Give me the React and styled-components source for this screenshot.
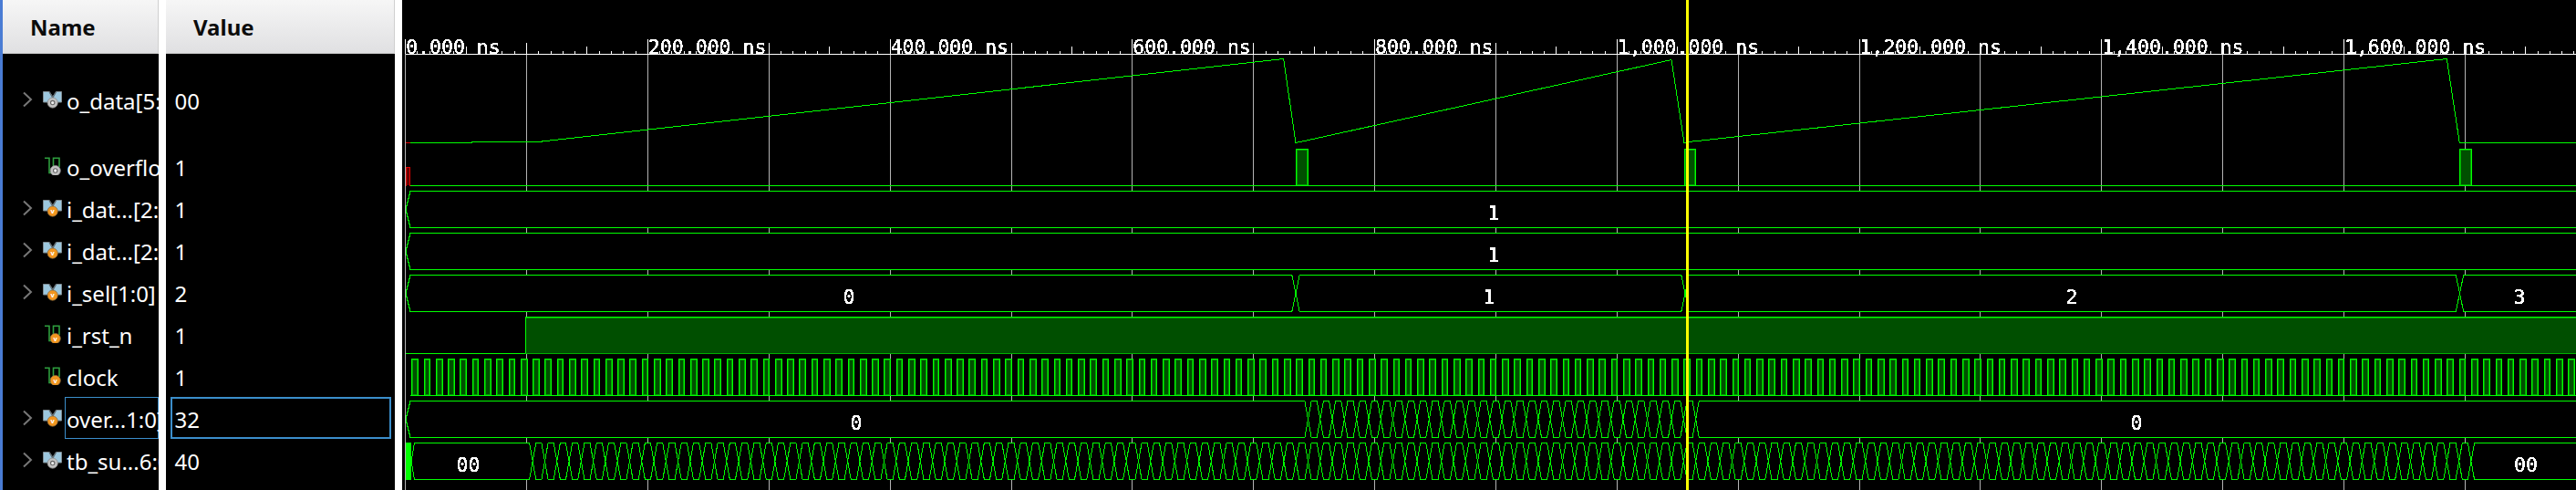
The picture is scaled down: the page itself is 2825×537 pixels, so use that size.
import React from "react";
import styled, { createGlobalStyle } from "styled-components";

const GREEN = "#00ff00";
const STEP = 132.86; // px per 100 ns
const X0 = 444.7;
const WIDTH = 2825;
const PANE_X = 441;

const xAt = ns => X0 + (ns / 100) * STEP;
const px = x => Math.floor(x) + 0.5;

const GlobalStyle = createGlobalStyle`
  html, body {
    margin: 0;
    padding: 0;
    background: #000;
    overflow: hidden;
  }
`;

const Container = styled.div`
  display: flex;
  width: 2825px;
  height: 537px;
  background: #fff;
  font-family: "Noto Sans", sans-serif;
  border-left: 3px solid #4a7cd4;
  box-sizing: border-box;
`;

const Column = styled.div`
  flex: none;
  width: ${props => props.$width}px;
  margin-right: ${props => props.$gap}px;
  background: #000;
  overflow: hidden;
`;

const Header = styled.div`
  height: 59px;
  box-sizing: border-box;
  padding-left: ${props => props.$pad}px;
  display: flex;
  align-items: center;
  background: linear-gradient(#f6f6f6, #e0e0e2);
  border-bottom: 1px solid #c6c6c6;
  border-right: 1px solid #cfcfcf;
  color: #0c0c0c;
  font-size: 24px;
  font-weight: 700;
`;

const NameRow = styled.div`
  display: flex;
  align-items: center;
  height: ${props => (props.$tall ? 100 : 46)}px;
  padding-left: 19px;
`;

const ChevronSlot = styled.div`
  flex: none;
  width: 24px;
  height: 18px;
`;

const Chevron = styled.svg`
  display: block;
  width: 14px;
  height: 18px;
  fill: none;
  stroke: #777;
  stroke-width: 2;
`;

const IconSlot = styled.svg`
  flex: none;
  display: block;
  width: 25px;
  height: 20px;
`;

const NameLabel = styled.div`
  flex: 1;
  min-width: 0;
  height: 46px;
  line-height: 49px;
  padding-left: 2px;
  color: #fff;
  font-size: 24px;
  white-space: nowrap;
  overflow: hidden;
  box-shadow: ${props => (props.$selected ? "inset 0 0 0 1px #3b8ecb" : "none")};
`;

const ValueRow = styled.div`
  height: ${props => (props.$tall ? 100 : 46)}px;
  display: flex;
  align-items: center;
  padding-left: 4.6px;
`;

const ValueLabel = styled.div`
  width: 242px;
  height: 46px;
  line-height: 49px;
  box-sizing: border-box;
  padding-left: 5px;
  color: #fff;
  font-size: 24px;
  white-space: nowrap;
  box-shadow: ${props => (props.$selected ? "inset 0 0 0 2px #3b8ecb" : "none")};
`;

const WavePane = styled.div`
  flex: 1;
  min-width: 0;
  background: #000;
`;

const WaveSvg = styled.svg`
  display: block;
  shape-rendering: crispEdges;
`;

const MonoText = styled.text`
  font-family: "DejaVu Sans Mono", monospace;
  font-size: 21.5px;
  fill: #fff;
`;

const Trace = styled.path`
  fill: ${props => props.$fill || "none"};
  stroke: ${props => props.$stroke || GREEN};
  stroke-width: 1;
`;

const signals = [
  { name: "o_data[5:0]", value: "00", kind: "bus", dir: "out", tall: true },
  { name: "o_overflow", value: "1", kind: "bit", dir: "out" },
  { name: "i_dat...[2:0]", value: "1", kind: "bus", dir: "in" },
  { name: "i_dat...[2:0]", value: "1", kind: "bus", dir: "in" },
  { name: "i_sel[1:0]", value: "2", kind: "bus", dir: "in" },
  { name: "i_rst_n", value: "1", kind: "bit", dir: "in" },
  { name: "clock", value: "1", kind: "bit", dir: "in" },
  { name: "over...1:0]", value: "32", kind: "bus", dir: "in", selected: true },
  { name: "tb_su...6:0]", value: "40", kind: "bus", dir: "out" }
];

const Badge = ({ cx, cy, dir }) =>
  dir === "in" ? (
    <>
      <circle cx={cx} cy={cy} r="5.6" fill="#f2951f" stroke="#8a6a3a" strokeWidth="0.8" />
      <text x={cx} y={cy + 2.6} fontSize="7.5" fontWeight="700" fill="#fff" textAnchor="middle">
        v
      </text>
    </>
  ) : (
    <>
      <circle cx={cx} cy={cy} r="5.6" fill="#c2c2c2" stroke="#8c8c8c" strokeWidth="0.8" />
      <circle cx={cx} cy={cy} r="2.2" fill="#eee" stroke="#666" strokeWidth="1.1" />
    </>
  );

const SignalIcon = ({ kind, dir }) => (
  <IconSlot viewBox="0 0 25 20">
    {kind === "bus" ? (
      <>
        <path d="M1.5 1.5H8L11.8 7L15.6 1.5H21.5V13H1.5Z" fill="#9cc7de" stroke="#7f8b92" strokeWidth="1" />
        <path d="M8 1.5L11.8 8L15.6 1.5" fill="none" stroke="#5f6a70" strokeWidth="1.4" />
        <Badge cx={11.7} cy={13.6} dir={dir} />
      </>
    ) : (
      <>
        <path d="M3 1.2H8V17.5H12.5V1.2H19V11" fill="none" stroke="#2e9e3e" strokeWidth="1.6" />
        <Badge cx={14.7} cy={15} dir={dir} />
      </>
    )}
  </IconSlot>
);

const SignalName = ({ signal }) => (
  <NameRow $tall={signal.tall}>
    <ChevronSlot>
      {signal.kind === "bus" && (
        <Chevron viewBox="0 0 14 18">
          <path d="M4 1.5L12 9L4 16.5" />
        </Chevron>
      )}
    </ChevronSlot>
    <SignalIcon kind={signal.kind} dir={signal.dir} />
    <NameLabel $selected={signal.selected}>{signal.name}</NameLabel>
  </NameRow>
);

// row tops in the wave pane, the trace sits 4px under this
const rowTop = index => 159 + 46 * index;

const busPath = (top, start, crossings, hw, startHw) => {
  const y1 = top + 4.5;
  const y2 = top + 44.5;
  const mid = top + 24.5;
  const edges = [start, ...crossings, WIDTH + 20];
  let d = "";
  for (let i = 0; i < edges.length - 1; i++) {
    const a = edges[i];
    const b = edges[i + 1];
    const h = i === 0 ? startHw : hw;
    d += `M${a} ${mid}L${a + h} ${y1}L${b - hw} ${y1}L${b} ${mid}L${b - hw} ${y2}L${a + h} ${y2}Z`;
  }
  return d;
};

const BusTrace = ({ top, start = 445, crossings = [], hw = 4.2, startHw = 5, labels }) => (
  <>
    <Trace d={busPath(top, start, crossings, hw, startHw)} $fill="#000" />
    <g filter="url(#hardText)">
      {labels.map(([x, text]) => (
        <MonoText key={x} x={x} y={top + 36} textAnchor="middle">
          {text}
        </MonoText>
      ))}
    </g>
  </>
);

const Pulse = ({ x1, x2, y1, y2, fill = "#004f00", inner = "#00a000", line = GREEN }) => (
  <>
    <rect x={x1} y={y1} width={x2 - x1} height={y2 - y1} fill={fill} />
    <rect x={x1 + 1.5} y={y1 + 1.5} width={Math.max(x2 - x1 - 3, 0)} height={y2 - y1 - 2} fill="none" stroke={inner} />
    <Trace d={`M${x1 + 0.5} ${y2 + 0.5}V${y1 + 0.5}H${x2 - 0.5}V${y2 + 0.5}`} $stroke={line} />
  </>
);

const range = (from, to) => Array.from({ length: to - from + 1 }, (_, i) => from + i);
// data changes on the rising clock edge, 5 ns into each 10 ns period
const edge = n => xAt(5 + n * 10);

const rulerTicks = range(0, 180).map(i => {
  const x = px(xAt(i * 10));
  let y = 56;
  if (i % 20 === 0) y = 43;
  else if (i % 10 === 0) y = 47;
  else if (i % 5 === 0) y = 51;
  return { x, y };
});

const analog = [
  [450, 156.5], [517, 156.5], [517, 155.5], [590, 155.5], [1407.6, 64.5], [1421, 156.5], [1426, 155.5],
  [1833, 65.5], [1847, 156.5], [1852, 155.5], [2683.3, 64.5], [2697.3, 156.5], [WIDTH, 156.5]
];

const clockPulses = range(0, 179).map(n => ({ x1: Math.round(edge(n)), x2: Math.round(xAt((n + 1) * 10)) + 1 }));

const Waveforms = () => (
  <WaveSvg width={WIDTH - PANE_X} height="537" viewBox={`${PANE_X} 0 ${WIDTH - PANE_X} 537`}>
    <defs>
      <filter id="hardText" x="-20%" y="-20%" width="140%" height="140%" colorInterpolationFilters="sRGB">
        <feComponentTransfer>
          <feFuncA type="discrete" tableValues="0 1 1 1" />
        </feComponentTransfer>
      </filter>
    </defs>

    {range(0, 17).map(k => (
      <path key={k} d={`M${px(xAt(k * 100))} 59V537`} stroke="#b4b4b4" fill="none" />
    ))}

    <rect x={X0} y="59" width={WIDTH - X0} height="1.4" fill="#fff" />
    {rulerTicks.map(t => (
      <path key={t.x} d={`M${t.x} ${t.y}V59`} stroke="#fff" fill="none" />
    ))}
    <g filter="url(#hardText)">
      {range(0, 8).map(k => (
        <MonoText key={k} x={xAt(k * 200) + 0.5} y="59">
          {`${(k * 200).toLocaleString("en-US")}.000 ns`}
        </MonoText>
      ))}
    </g>

    {/* o_data analog */}
    <Trace d="M445 156.5H450" $stroke="#e00000" />
    <Trace d={`M${analog.map(p => p.join(" ")).join("L")}`} />

    {/* o_overflow */}
    <Trace d={`M450 203.5H${WIDTH}`} />
    <Pulse x1={445} x2={450} y1={183} y2={203} fill="#6a0000" inner="#6a0000" line="#e00000" />
    <Pulse x1={1421} x2={1435} y1={163} y2={203} />
    <Pulse x1={1847} x2={1860} y1={163} y2={203} />
    <Pulse x1={2697} x2={2711} y1={163} y2={203} />

    <BusTrace top={rowTop(1)} labels={[[1638, "1"]]} />
    <BusTrace top={rowTop(2)} labels={[[1638, "1"]]} />
    <BusTrace
      top={rowTop(3)}
      crossings={[1421, 1848, 2697.5]}
      labels={[[931, "0"], [1633, "1"], [2272, "2"], [2763, "3"]]}
    />

    {/* i_rst_n */}
    <rect x="576" y="347" width={WIDTH - 576} height="40" fill="#004f00" />
    <Trace d="M577 348.5H2825" $stroke="#00a000" />
    <Trace d="M445 387.5H576" />
    <Trace d="M576 387.5H2825" $stroke="#00b000" />
    <Trace d={`M576.5 387V347.5H${WIDTH}`} />

    {/* clock */}
    <Trace d={`M450 433.5H${WIDTH}`} />
    {clockPulses.map(p => (
      <Pulse key={p.x1} x1={p.x1} x2={p.x2} y1={393} y2={433} />
    ))}

    <BusTrace
      top={rowTop(6)}
      crossings={range(74, 106).map(edge)}
      hw={3.6}
      labels={[[939, "0"], [2343, "0"]]}
    />

    <rect x="445" y="485" width="6" height="41" fill="#00ff00" />
    <BusTrace
      top={rowTop(7)}
      start={451}
      startHw={3.5}
      crossings={range(10, 170).map(edge)}
      hw={3.6}
      labels={[[513.5, "00"], [2770, "00"]]}
    />

    <path d={`M${px(X0)} 59V537`} stroke="#b4b4b4" fill="none" />
    <rect x="1849" y="0" width="3" height="537" fill="#ffff00" />
  </WaveSvg>
);

const App = () => (
  <Container>
    <GlobalStyle />
    <Column $width={171} $gap={8}>
      <Header $pad={30}>Name</Header>
      {signals.map(signal => (
        <SignalName key={signal.name + signal.value + signal.dir + signal.kind} signal={signal} />
      ))}
    </Column>
    <Column $width={251} $gap={8}>
      <Header $pad={30}>Value</Header>
      {signals.map((signal, i) => (
        <ValueRow key={i} $tall={signal.tall}>
          <ValueLabel $selected={signal.selected}>{signal.value}</ValueLabel>
        </ValueRow>
      ))}
    </Column>
    <WavePane>
      <Waveforms />
    </WavePane>
  </Container>
);

export default App;
